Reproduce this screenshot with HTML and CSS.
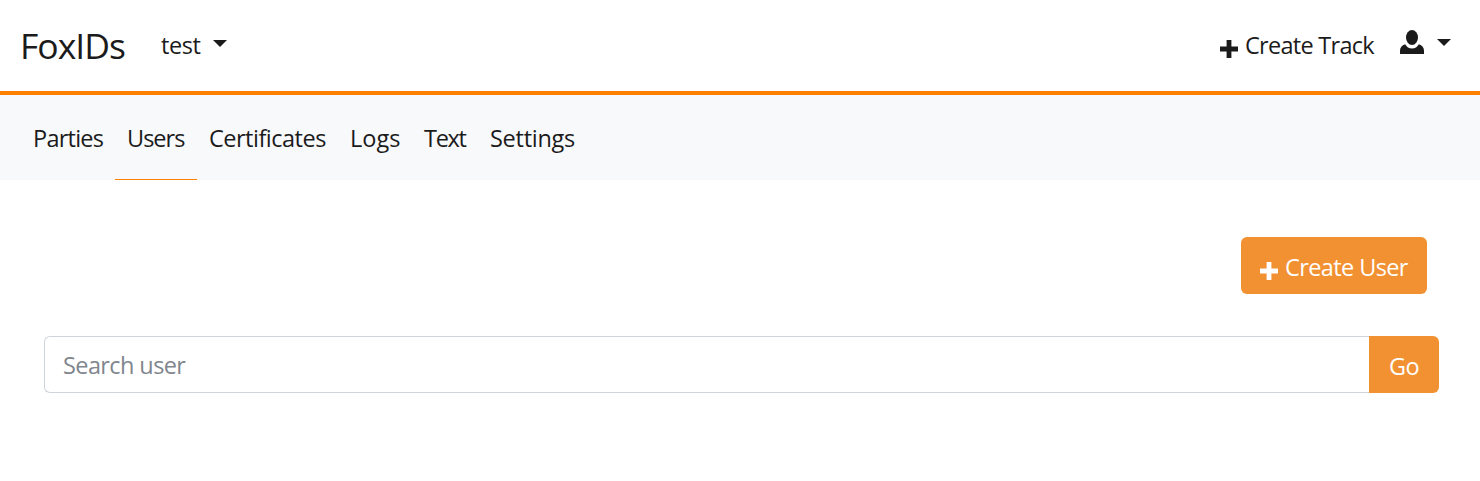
FILE: index.html
```html
<!DOCTYPE html>
<html lang="en">
<head>
<meta charset="utf-8">
<title>FoxIDs</title>
<link rel="stylesheet" href="styles.css">
</head>
<body>
<header class="topbar">
  <a class="brand">FoxIDs</a>
  <a class="track"><span class="track-name">test</span><span class="caret"></span></a>
  <a class="create-track"><svg class="plus" viewBox="0 0 18 18"><path d="M6.600 0h4.800v6.600H18v4.800h-6.600V18H6.600v-6.600H0V6.600h6.600z"/></svg><span class="create-track-label">Create Track</span></a>
  <a class="account"><svg class="person" viewBox="0 0 24 24"><ellipse cx="12" cy="7.500" rx="6" ry="7.500"/><path d="M5.200 14.200C6.600 17 9 18.400 12 18.400s5.400-1.400 6.800-4.200C22.200 15.200 24 17.400 24 20.700V24H0v-3.300C0 17.400 1.800 15.200 5.200 14.200z"/></svg><span class="caret"></span></a>
</header>
<nav class="tabs">
  <a class="tab parties"><span>Parties</span></a>
  <a class="tab users active"><span>Users</span></a>
  <a class="tab certificates"><span>Certificates</span></a>
  <a class="tab logs"><span>Logs</span></a>
  <a class="tab text"><span>Text</span></a>
  <a class="tab settings"><span>Settings</span></a>
</nav>
<main class="content">
  <div class="actions">
    <button class="button create-user"><svg class="plus" viewBox="0 0 18 18"><path d="M6.600 0h4.800v6.600H18v4.800h-6.600V18H6.600v-6.600H0V6.600h6.600z"/></svg><span class="create-user-label">Create User</span></button>
  </div>
  <form class="search">
    <input class="search-input" type="text" placeholder="Search user">
    <button class="button go" type="button">Go</button>
  </form>
</main>
</body>
</html>
```
FILE: styles.css
```css
* { box-sizing: border-box; }
body {
  margin: 0;
  background: #fff;
  color: #1b1b1b;
  font: 400 23.5px/36px "Segoe UI", "Open Sans", "Noto Sans", sans-serif;
  letter-spacing: -0.5px;
  white-space: nowrap;
  overflow: hidden;
}
.topbar {
  display: flex;
  height: 95px;
  padding: 0 29px 0 21px;
  border-bottom: 4px solid #ff8000;
}
.brand { width: 140px; padding-top: 19px; font-size: 35.5px; line-height: 52px; letter-spacing: -1px; text-indent: -1px; }
.track { display: flex; padding-top: 27px; }
.track-name { width: 52px; letter-spacing: -0.4px; }
.caret {
  width: 14px;
  height: 7px;
  margin-top: 13px;
  border: 7px solid transparent;
  border-top-color: currentColor;
  border-bottom: 0;
}
.create-track { display: flex; margin-left: auto; padding-top: 27px; }
.plus { flex: none; width: 18px; height: 18px; fill: currentColor; }
.create-track .plus { margin: 13px 7px 0 0; }
.create-track-label { width: 155px; letter-spacing: -0.72px; }
.account { display: flex; padding-top: 26px; }
.person { width: 24px; height: 24px; margin: 4px 13px 0 0; fill: currentColor; }
.tabs {
  display: flex;
  height: 85px;
  padding-left: 21px;
  background: #f8f9fb;
}
.tab { padding: 25px 0 0 12px; border-bottom: 1px solid transparent; }
.tab.active { border-bottom-color: #ff8000; }
.parties { width: 94px; letter-spacing: -0.75px; }
.users { width: 82px; letter-spacing: -1px; }
.certificates { width: 141px; letter-spacing: -0.5px; }
.logs { width: 74px; letter-spacing: 0; }
.text { width: 66px; letter-spacing: -1.3px; }
.settings { width: 109px; letter-spacing: -0.27px; }
.content { padding: 57px 41px 0 44px; }
.actions { display: flex; justify-content: flex-end; padding-right: 12px; }
.button {
  display: flex;
  height: 57px;
  margin: 0;
  padding: 12px 0 0 19px;
  border: 0;
  border-radius: 6px;
  background: #f29132;
  color: #fff;
  font: inherit;
  letter-spacing: -0.6px;
}
.create-user { width: 186px; }
.create-user .plus { margin: 13px 7px 0 0; }
.search { display: flex; margin: 42px 0 0; }
.search-input {
  flex: 1;
  min-width: 0;
  height: 57px;
  padding: 1px 18px 0 18px;
  border: 1px solid #ced4da;
  border-right: 0;
  border-radius: 6px 0 0 6px;
  outline: 0;
  font: inherit;
  letter-spacing: -0.6px;
}
.search-input::placeholder { color: #7f868d; opacity: 1; }
.go { width: 70px; padding-left: 20px; border-radius: 0 6px 6px 0; }
```
